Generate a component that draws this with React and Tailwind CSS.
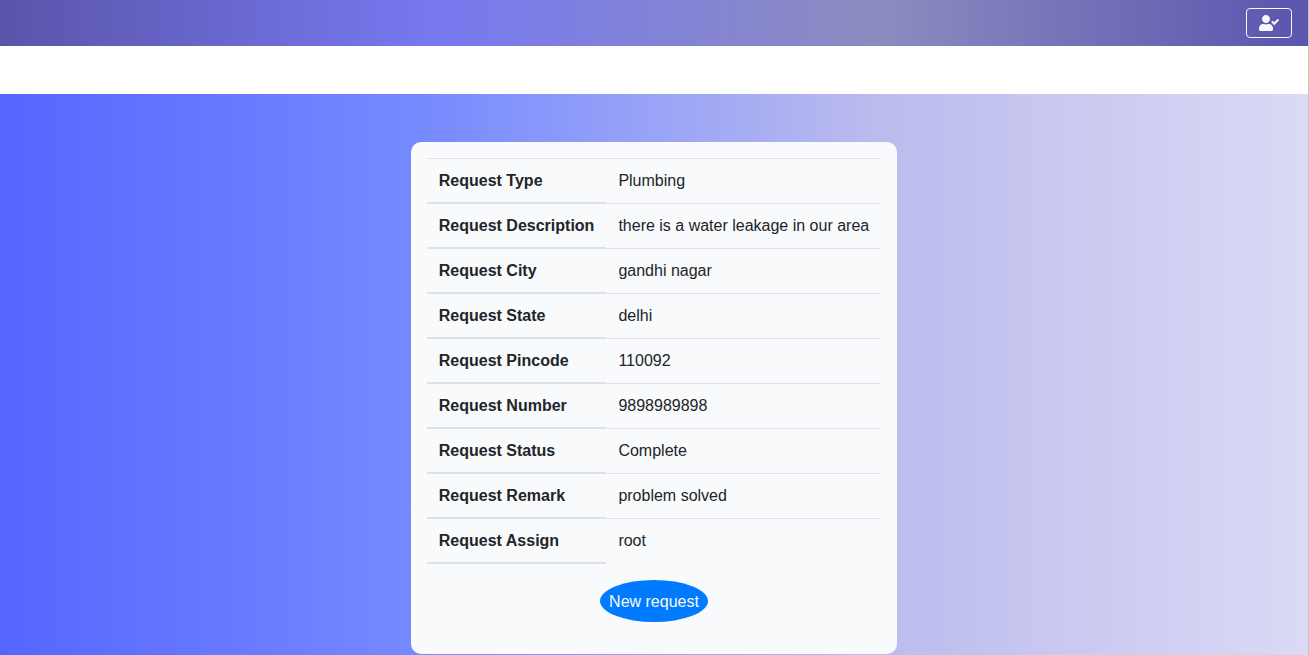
import { FaUserCheck } from "react-icons/fa";

const rows = [
  ["Request Type", "Plumbing"],
  ["Request Description", "there is a water leakage in our area"],
  ["Request City", "gandhi nagar"],
  ["Request State", "delhi"],
  ["Request Pincode", "110092"],
  ["Request Number", "9898989898"],
  ["Request Status", "Complete"],
  ["Request Remark", "problem solved"],
  ["Request Assign", "root"],
];

export default function App() {
  return (
    <div className="flex min-h-screen flex-col border-r border-[#c8c4c0] bg-white font-['Liberation_Sans',Arial,sans-serif] text-base text-[#212529]">
      <header className="flex justify-end bg-[linear-gradient(90deg,#5a55aa_0%,#7878f0_33%,#8c8cc0_67%,#5a55ae_100%)] px-4 py-2">
        <button
          type="button"
          aria-label="Account"
          className="flex h-[30px] w-[46px] items-center justify-center rounded border border-[#f8f9fa] text-[#f8f9fa]"
        >
          <FaUserCheck className="h-4 w-5" aria-hidden="true" />
        </button>
      </header>
      <main className="mt-12 flex grow items-start justify-center bg-[linear-gradient(90deg,#5566ff_0%,#778bff_33%,#bbbbee_67%,#dadaf5_100%)] pt-12 pb-px">
        <section className="flex flex-col items-center rounded-[10px] bg-[#f8fafc] px-4 pt-4 pb-8">
          <table className="mb-4 border-collapse text-left leading-[19px]">
            <tbody>
              {rows.map(([label, value]) => (
                <tr key={label}>
                  <th
                    scope="row"
                    className="border-t border-b-2 border-[#dee2e6] px-3 py-3 align-bottom font-bold"
                  >
                    {label}
                  </th>
                  <td className="border-t border-[#dee2e6] px-3 py-3 align-top">{value}</td>
                </tr>
              ))}
            </tbody>
          </table>
          <button type="button" className="rounded-[50%] bg-[#007bff] px-[9px] pt-[10px] pb-2 text-[#f8f9fa]">
            New request
          </button>
        </section>
      </main>
    </div>
  );
}
